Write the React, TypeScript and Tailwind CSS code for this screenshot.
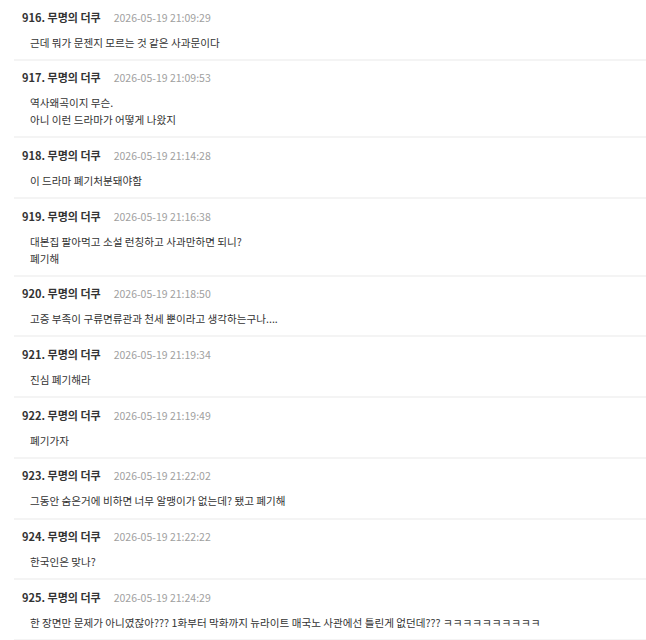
const comments: { no: number; time: string; lines: string[] }[] = [
  { no: 916, time: '2026-05-19 21:09:29', lines: ['근데 뭐가 문젠지 모르는 것 같은 사과문이다'] },
  { no: 917, time: '2026-05-19 21:09:53', lines: ['역사왜곡이지 무슨.', '아니 이런 드라마가 어떻게 나왔지'] },
  { no: 918, time: '2026-05-19 21:14:28', lines: ['이 드라마 폐기처분돼야함'] },
  { no: 919, time: '2026-05-19 21:16:38', lines: ['대본집 팔아먹고 소설 런칭하고 사과만하면 되니?', '폐기해'] },
  { no: 920, time: '2026-05-19 21:18:50', lines: ['고증 부족이 구류면류관과 천세 뿐이라고 생각하는구나....'] },
  { no: 921, time: '2026-05-19 21:19:34', lines: ['진심 폐기해라'] },
  { no: 922, time: '2026-05-19 21:19:49', lines: ['폐기가자'] },
  { no: 923, time: '2026-05-19 21:22:02', lines: ['그동안 숨은거에 비하면 너무 알맹이가 없는데? 됐고 폐기해'] },
  { no: 924, time: '2026-05-19 21:22:22', lines: ['한국인은 맞나?'] },
  {
    no: 925,
    time: '2026-05-19 21:24:29',
    lines: ['한 장면만 문제가 아니였잖아??? 1화부터 막화까지 뉴라이트 매국노 사관에선 틀린게 없던데??? ㅋㅋㅋㅋㅋㅋㅋㅋㅋㅋ'],
  },
];

export default function App() {
  return (
    <div
      className="min-h-[640px] bg-white text-[#333]"
      style={{ fontFamily: '"Noto Sans CJK KR", "Noto Sans", sans-serif' }}
    >
      <ul className="ml-[14px]">
        {comments.map((c) => (
          <li key={c.no} className="border-b-2 border-[#f4f4f4] pt-[8.5px] pb-[8.2px] pl-[8px]">
            <div className="flex items-center leading-[17px]">
              <span className="text-[11px] font-bold text-[#333]">
                {c.no}. 무명의 더쿠
              </span>
              <span className="ml-[13px] text-[10.5px] text-[#a0a0a0]">{c.time}</span>
            </div>
            <div className="mt-[8px] pl-[8px] text-[10.6px] leading-[17px] text-[#333]">
              {c.lines.map((l, i) => (
                <p key={i}>{l}</p>
              ))}
            </div>
          </li>
        ))}
      </ul>
    </div>
  );
}
